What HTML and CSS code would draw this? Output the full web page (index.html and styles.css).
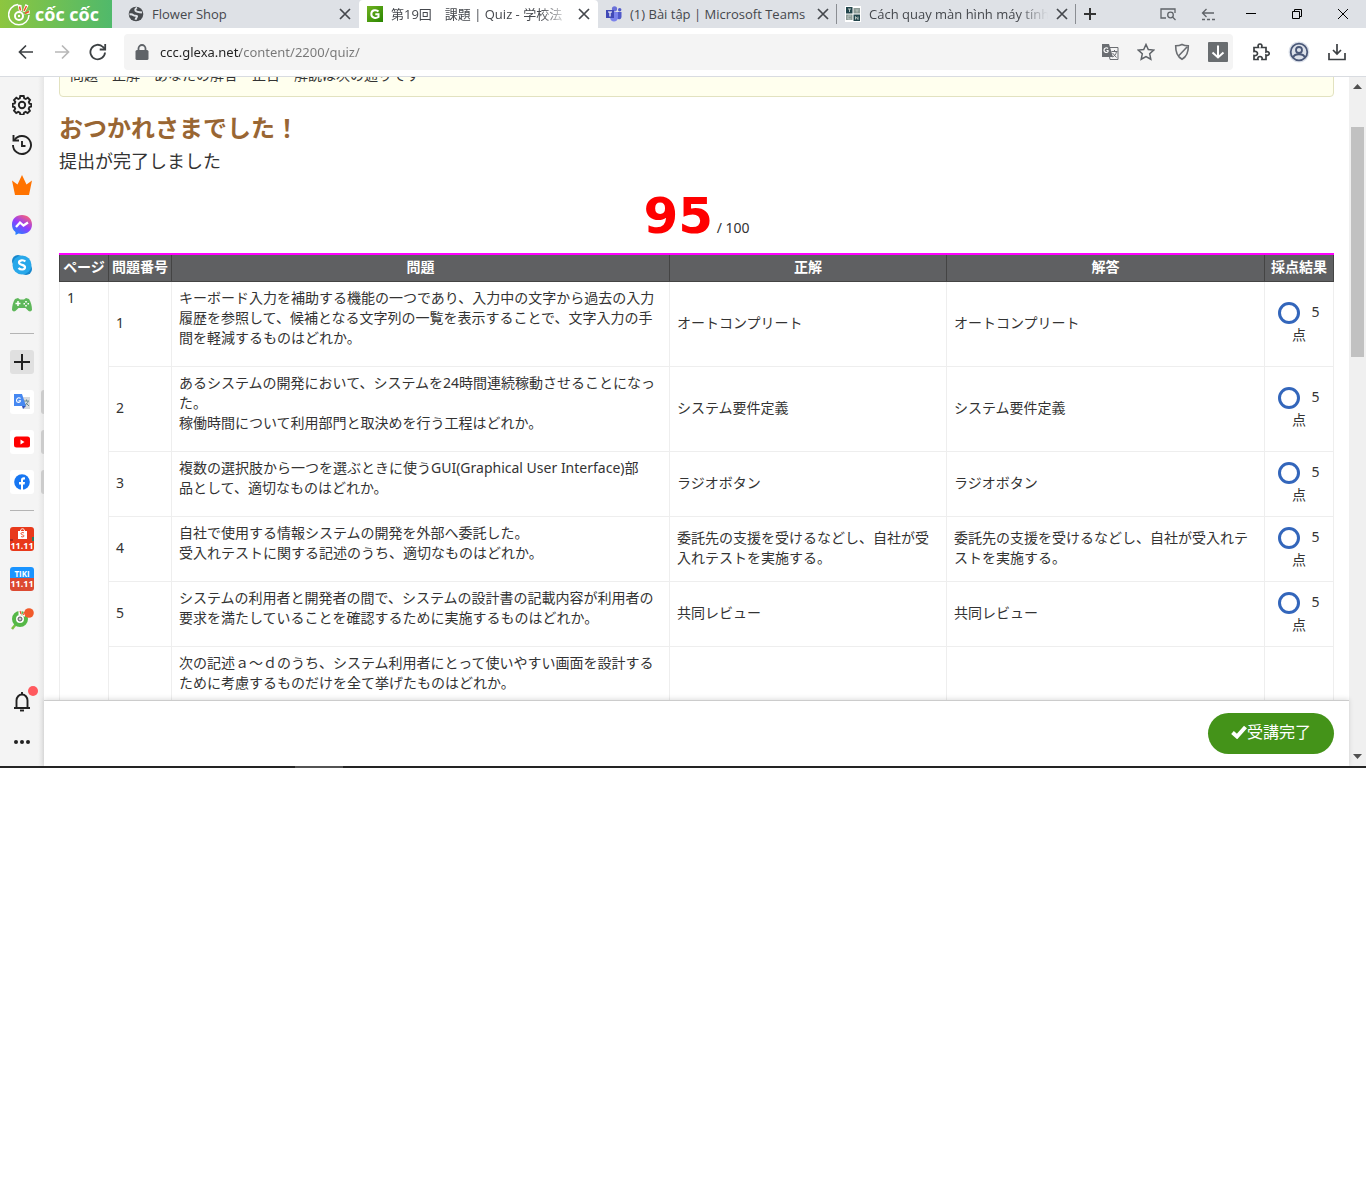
FILE: index.html
```html
<!DOCTYPE html>
<html lang="ja">
<head>
<meta charset="utf-8">
<meta name="viewport" content="width=device-width, initial-scale=1">
<title>第19回 課題 | Quiz</title>
<link rel="stylesheet" href="styles.css">
</head>
<body>
<div class="browser">
  <header class="tabstrip">
    <button class="brand" aria-label="Cốc Cốc">
      <svg width="22" height="24" viewBox="0 0 22 24" fill="none"><path d="M10 2.500A10.200 10.200 0 1 0 21 13" stroke="#fff" stroke-width="1.500"/><circle cx="11" cy="14" r="4" stroke="#fff" stroke-width="2"/><circle cx="11" cy="14" r="1.200" fill="#fff"/><path d="M11 9.500L9.500 2.500l4 .5.500 6zM14.500 9.500L17.500 2l3 1.500L17 10zM16 12.500L21.500 8l.5 3.500z" fill="#fff"/><path d="M12.500 8.500l-1-4M16 9l2.500-5M17 11.500l4-2" stroke="#f0512d" stroke-width="1.600"/></svg>
      <span class="brand-name">cốc cốc</span>
    </button>
    <nav class="tabs">
      <div class="tab">
        <svg width="16" height="16" viewBox="0 0 16 16"><circle cx="8" cy="8" r="7.300" fill="#484b4f"/><path d="M1.500 8.500c2-.5 3 0 4 .7s3 .3 3.500 1-1 1.500-1.500 3.500M9 1.500C6.500 3 7 4.500 8.500 5.500S12 6 14 6.500" fill="none" stroke="#dee1e6" stroke-width="2"/></svg>
        <a class="tab-title" href="#">Flower Shop</a>
        <button class="close" aria-label="Close tab"><svg width="12" height="12" viewBox="0 0 12 12"><path d="M1 1l10 10M11 1L1 11"/></svg></button>
      </div>
      <div class="tab active">
        <svg width="16" height="16" viewBox="0 0 16 16"><defs><linearGradient id="g" x1="0" y1="0" x2="1" y2="1"><stop stop-color="#72b321"/><stop offset="1" stop-color="#288500"/></linearGradient></defs><path fill="url(#g)" d="M0 0h16v16H0z"/><path d="M11.500 5.500C9.500 3.300 4.300 3.700 4.300 8c0 4.500 5 4.500 7.200 3V8.300H8.300" fill="none" stroke="#fff" stroke-width="2"/></svg>
        <a class="tab-title" href="#">第19回　課題 | Quiz - 学校法</a>
        <button class="close" aria-label="Close tab"><svg width="12" height="12" viewBox="0 0 12 12"><path d="M1 1l10 10M11 1L1 11"/></svg></button>
      </div>
      <div class="tab lined">
        <svg width="16" height="16" viewBox="0 0 16 16"><circle cx="8.500" cy="2.800" r="2.600" fill="#6a70d8"/><circle cx="13.700" cy="3.700" r="1.700" fill="#5059c9"/><path d="M11 6h4.500v4.500c0 3-3 3.500-4.500 2z" fill="#5059c9"/><path d="M4 6h8v5c0 6-8 6-8 0z" fill="#7b83eb"/><path d="M0 4h8v8H0z" fill="#4049b6"/><path d="M2 6h4M4 6v4.500" stroke="#fff" stroke-width="1.200"/></svg>
        <a class="tab-title" href="#">(1) Bài tập | Microsoft Teams</a>
        <button class="close" aria-label="Close tab"><svg width="12" height="12" viewBox="0 0 12 12"><path d="M1 1l10 10M11 1L1 11"/></svg></button>
      </div>
      <div class="tab lined">
        <svg width="16" height="16" viewBox="0 0 16 16"><path fill="#fff" d="M0 0h16v16H0z"/><path fill="#22454b" d="M1 1h6.500v6.500H1zM8.500 8.500H15V15H8.500z"/><path fill="#8e9c97" d="M8.500 2H15v5.500H8.500zM1 8.500h6.500V14H1z"/><path d="M3 3h3M4.500 3v3M10.500 4h3M12 4v2.500M6 10H3v3h3M10.500 13.500v-3l2.500 3v-3" fill="none" stroke="#b8c4c0" stroke-width="1"/></svg>
        <a class="tab-title" href="#">Cách quay màn hình máy tính</a>
        <button class="close" aria-label="Close tab"><svg width="12" height="12" viewBox="0 0 12 12"><path d="M1 1l10 10M11 1L1 11"/></svg></button>
      </div>
    </nav>
    <button class="newtab" aria-label="New tab"><svg width="12" height="12" viewBox="0 0 12 12"><path d="M6 0v12M0 6h12" stroke="#333" stroke-width="2"/></svg></button>
    <div class="winctl">
      <button aria-label="Search tabs"><svg width="16" height="14" viewBox="0 0 16 14" fill="none" stroke="#5f6368" stroke-width="1.300"><path d="M6 11H1V2h14v4"/><circle cx="10.500" cy="8" r="2.800"/><path d="M12.500 10l3 3"/></svg></button>
      <button aria-label="Back tabs"><svg width="14" height="14" viewBox="0 0 14 14" fill="none" stroke="#5f6368" stroke-width="1.300"><path d="M13 6H1.500M5.500 2l-4 4 4 4"/><path d="M1 12.500h13" stroke-dasharray="3 2"/></svg></button>
      <button aria-label="Minimize"><svg width="10" height="10" viewBox="0 0 10 10"><path d="M0 4h10v1H0z"/></svg></button>
      <button aria-label="Restore"><svg width="10" height="10" viewBox="0 0 10 10" fill="none" stroke="#000"><path d="M.5 2.500h7v7h-7zM2.500 2.500v-2h7v7h-2"/></svg></button>
      <button aria-label="Close window"><svg width="10" height="10" viewBox="0 0 10 10" stroke="#000"><path d="M0 0l10 10M10 0L0 10"/></svg></button>
    </div>
  </header>

  <div class="toolbar">
    <button aria-label="Back"><svg width="16" height="16" viewBox="0 0 16 16" fill="none" stroke="#3c4043" stroke-width="1.700"><path d="M15 8H2M8 1.500L1.500 8 8 14.500"/></svg></button>
    <button aria-label="Forward"><svg width="16" height="16" viewBox="0 0 16 16" fill="none" stroke="#b8b8b8" stroke-width="1.700"><path d="M1 8h13M8 1.500L14.500 8 8 14.500"/></svg></button>
    <button aria-label="Reload"><svg width="18" height="18" viewBox="0 0 18 18" fill="none" stroke="#3c4043" stroke-width="1.800"><path d="M16 9.500A7.300 7.300 0 1 1 14 4l2 2"/><path d="M16.200 1v5.500h-5.500"/></svg></button>
    <div class="address">
      <svg width="14" height="16" viewBox="0 0 14 16"><rect x=".5" y="6" width="13" height="10" rx="1.500" fill="#5f6368"/><path d="M3.500 7V4.500a3.500 3.500 0 0 1 7 0V7" fill="none" stroke="#5f6368" stroke-width="1.800"/></svg>
      <input class="url" type="text" aria-label="Address" value="ccc.glexa.net/content/2200/quiz/">
      <div class="actions">
        <button aria-label="Translate"><svg width="18" height="18" viewBox="0 0 18 18"><path d="M7 4.500h10v12H9z" fill="#f4f4f4" stroke="#6b6e72"/><path d="M1 1h7l4 13H1z" fill="#6b6e72"/><path d="M7 5.500C5.500 4 3 5 3 7.200s3 3 4 1.500V7.500H5.500" fill="none" stroke="#fff" stroke-width="1.200"/><path d="M10.500 8.500h6M13.500 7v1.500M15.500 8.500c-.5 3-2 4.500-4 5.500M11.500 10l4 4.500" fill="none" stroke="#6b6e72"/></svg></button>
        <button aria-label="Bookmark"><svg width="18" height="18" viewBox="0 0 18 18"><path d="M9 1.500l2.300 5 5.400.6-4 3.700 1.100 5.400L9 13.500l-4.800 2.700 1.100-5.400-4-3.700 5.400-.6z" fill="none" stroke="#5f6368" stroke-width="1.500"/></svg></button>
        <button aria-label="Shield"><svg width="16" height="18" viewBox="0 0 16 18" fill="none" stroke="#6b6e72" stroke-width="1.600"><path d="M8 1.500c2 1 4 1.300 6.300 1.300C14.500 9 13 13.500 8 16.300 3 13.500 1.500 9 1.700 2.800 4 2.800 6 2.500 8 1.500zM13 4L4 13.500"/></svg></button>
        <button aria-label="Download video"><svg width="20" height="20" viewBox="0 0 20 20"><rect width="20" height="20" rx="1" fill="#696d70"/><path d="M10 3.500v12M4.500 10.500l5.500 5 5.500-5" fill="none" stroke="#fff" stroke-width="2"/></svg></button>
      </div>
    </div>
    <div class="extras">
      <button aria-label="Extensions"><svg width="18" height="18" viewBox="0 0 18 18"><path d="M2 4.500h4.500C5.500 2 6.500 1 8 1s2.500 1 1.500 3.500H14V9c2-.8 3.200 0 3.200 1.500S16 12.700 14 12v4.500h-4c.5-2-.5-3-2-3s-2.500 1-2 3H2v-4c2.500.5 3.500-.7 3.500-2S4.500 8 2 8.500z" fill="none" stroke="#3c4043" stroke-width="1.700"/></svg></button>
      <button aria-label="Profile"><svg width="22" height="22" viewBox="0 0 22 22" fill="none" stroke="#4a5878" stroke-width="1.800"><circle cx="11" cy="11" r="10.500" fill="#dce1ea" stroke="none"/><circle cx="11" cy="11" r="8.300"/><circle cx="11" cy="9" r="3"/><path d="M5 17c1-5 11-5 12 0"/></svg></button>
      <button aria-label="Downloads"><svg width="18" height="18" viewBox="0 0 18 18" fill="none" stroke="#3c4043" stroke-width="1.700"><path d="M1 10v6.500h16V10M9 1v9.500M5 7l4 4 4-4"/></svg></button>
    </div>
  </div>

  <div class="body">
    <aside class="sidebar">
      <button aria-label="Settings"><svg width="20" height="20" viewBox="0 0 20 20" fill="none" stroke="#222" stroke-width="1.900"><circle cx="10" cy="10" r="3.200"/><path d="M8.300 1h3.400l.5 2.300 1.600.7 2-1.300 2.200 2.300-1.200 2 .7 1.600 1.800.4v2.500l-2 .7-.6 1.600 1.200 2-2.300 2.300-2-1.200-1.500.7-.5 2H8.300l-.5-2-1.600-.7-2 1.200L2 15.700l1.200-2-.7-1.600-1.800-.5V8.900l2-.5.600-1.500L2 5l2.300-2.300 2 1.300 1.500-.7z"/></svg></button>
      <button aria-label="History"><svg width="20" height="20" viewBox="0 0 20 20" fill="none" stroke="#222" stroke-width="1.900"><path d="M2.500 5A9 9 0 1 1 1 10"/><path d="M1.500 0v5.500H7M10 6v5h3.500"/></svg></button>
      <button aria-label="Rewards"><svg width="20" height="20" viewBox="0 0 20 20"><path d="M3 20L0 5.500l5.500 4L10 0l4.500 9.500 5.500-4L17 20z" fill="#ff7300"/></svg></button>
      <button aria-label="Messenger"><svg width="20" height="20" viewBox="0 0 20 20"><defs><linearGradient id="m" x1=".2" y1="1" x2=".8" y2="0"><stop stop-color="#1688ff"/><stop offset=".5" stop-color="#913cff"/><stop offset="1" stop-color="#ff6470"/></linearGradient></defs><path d="M10 0c6 0 10 4 10 9.600S16 19 10 19c-1.500 0-2.500-.2-3.500-.5L3.500 20v-3C1 15 0 13 0 9.600 0 4 4 0 10 0z" fill="url(#m)"/><path d="M4 12l4-4.500 3.500 3L16 7.500" fill="none" stroke="#fff" stroke-width="2.300"/></svg></button>
      <button aria-label="Skype"><svg width="20" height="20" viewBox="0 0 20 20"><circle cx="6" cy="6" r="6" fill="#1686cc"/><circle cx="14" cy="14" r="6" fill="#1686cc"/><circle cx="10" cy="10" r="9.500" fill="#28a8ea"/><path d="M13.300 6.500C11.500 4.500 7 5 7 7.500c0 3 6 1.700 6 4.700 0 2.800-4.500 3-6.500.8" fill="none" stroke="#fff" stroke-width="2.200"/></svg></button>
      <button aria-label="Games"><svg width="20" height="14" viewBox="0 0 20 14"><path d="M3 1l3-1 2 1.500h4L14 0l3 1c2 3 3 7 3 11-1 2-3 2-5-.5L13.500 10h-7L5 11.500C3 14 1 14 0 12 0 8 1 4 3 1z" fill="#5eb75a"/><path d="M6 3v5M3.500 5.500h5" stroke="#fff" stroke-width="1.500"/><path d="M14 3v1.500M14 7v1.500M11.500 5.700H13M15.500 5.700H17" stroke="#fff" stroke-width="1.600"/></svg></button>
      <hr>
      <button class="tile add" aria-label="Add"><svg width="16" height="16" viewBox="0 0 16 16"><path d="M8 0v16M0 8h16" stroke="#222" stroke-width="2"/></svg></button>
      <button class="tile open" aria-label="Google Translate"><svg width="16" height="16" viewBox="0 0 16 16"><path d="M7 3h9v12H9z" fill="#d8dadd"/><path d="M0 0h8l4 12H0z" fill="#4688f1"/><path d="M8 12h4l-3 3z" fill="#3152b8"/><path d="M6.500 4.500C5 3 2.500 4 2.500 6.500s3.500 2.500 4 .3H4.500" fill="none" stroke="#fff" stroke-width="1.100"/><path d="M10 7h5M12.500 5.500V7M14 7c0 2-1.500 3-3 4M12 9l3 3" fill="none" stroke="#6d8c8e"/></svg></button>
      <button class="tile open" aria-label="YouTube"><svg width="16" height="12" viewBox="0 0 16 12"><rect width="16" height="11" y=".5" rx="2.500" fill="#f00"/><path d="M6.500 3.500v5l4-2.500z" fill="#fff"/></svg></button>
      <button class="tile open" aria-label="Facebook"><svg width="16" height="16" viewBox="0 0 16 16"><circle cx="8" cy="8" r="7.800" fill="#1877f2"/><path d="M7 16v-5.500H5V8h2V6.200C7 4 8.500 3 11 3.500v2c-1.500-.1-2 .2-2 1.200V8h2l-.4 2.500H9V16z" fill="#fff"/></svg></button>
      <hr>
      <button class="promo shop" aria-label="Shopee"><svg width="24" height="14" viewBox="0 0 24 14"><path d="M0 12h3v2H0z" fill="#a32a20"/><path d="M22 10h2v4h-2z" fill="#287c60"/><path d="M8 4h9v8H8z" fill="#fff"/><path d="M10.500 4c0-3 4-3 4 0" fill="none" stroke="#fff"/><path d="M14 6c-1-1-3-.5-3 .7s3 1 3 2.200-2 1.300-3 .5" fill="none" stroke="#ee4d2d"/></svg><span>11.11</span></button>
      <button class="promo tiki" aria-label="Tiki"><span class="tiki-name">TIKI</span><span>11.11</span></button>
      <button class="news" aria-label="News"><svg width="24" height="24" viewBox="0 0 24 24"><path d="M2 22l4-5" stroke="#7bc143" stroke-width="2.500"/><circle cx="10" cy="12" r="6" fill="#fff" stroke="#55b847" stroke-width="4"/><circle cx="10" cy="12" r="2" fill="#ccc" stroke="#555"/><path d="M10 8V4M13 9l3-4" stroke="#fff" stroke-width="3"/><path d="M11 7l-1-3M13 8l2-3" stroke="#f0512d" stroke-width="1.200"/><circle cx="19" cy="6" r="4.800" fill="#f15a2b"/></svg></button>
      <div class="side-end">
        <button class="bell" aria-label="Notifications"><svg width="18" height="20" viewBox="0 0 18 20" fill="none" stroke="#222" stroke-width="1.900"><path d="M1 16h16M3.500 16V8.500a5.500 6 0 0 1 11 0V16M9 2.500V0"/><path d="M7 18.500h4"/></svg></button>
        <button aria-label="More"><svg width="16" height="4" viewBox="0 0 16 4" fill="#222"><circle cx="2" cy="2" r="2"/><circle cx="8" cy="2" r="2"/><circle cx="14" cy="2" r="2"/></svg></button>
      </div>
    </aside>

    <div class="page">
      <main class="content">
        <p class="notice">問題　正解　あなたの解答　正否　解説は次の通りです</p>
        <h1>おつかれさまでした！</h1>
        <p class="lead">提出が完了しました</p>
        <p class="score"><strong>95</strong> / 100</p>
        <table class="results">
          <colgroup><col class="c-page"><col class="c-num"><col><col class="c-correct"><col class="c-answer"><col class="c-result"></colgroup>
          <thead><tr><th>ページ</th><th>問題番号</th><th>問題</th><th>正解</th><th>解答</th><th>採点結果</th></tr></thead>
          <tbody>
            <tr><td class="pageno" rowspan="6">1</td><td>1</td><td><p>キーボード入力を補助する機能の一つであり、入力中の文字から過去の入力履歴を参照して、候補となる文字列の一覧を表示することで、文字入力の手間を軽減するものはどれか。</p></td><td>オートコンプリート</td><td>オートコンプリート</td><td class="mark"><span class="ok"></span>5<br>点</td></tr>
            <tr><td>2</td><td><p>あるシステムの開発において、システムを24時間連続稼動させることになった。<br>稼働時間について利用部門と取決めを行う工程はどれか。</p></td><td>システム要件定義</td><td>システム要件定義</td><td class="mark"><span class="ok"></span>5<br>点</td></tr>
            <tr><td>3</td><td><p>複数の選択肢から一つを選ぶときに使うGUI(Graphical User Interface)部<br>品として、適切なものはどれか。</p></td><td>ラジオボタン</td><td>ラジオボタン</td><td class="mark"><span class="ok"></span>5<br>点</td></tr>
            <tr><td>4</td><td><p>自社で使用する情報システムの開発を外部へ委託した。<br>受入れテストに関する記述のうち、適切なものはどれか。</p></td><td>委託先の支援を受けるなどし、自社が受入れテストを実施する。</td><td>委託先の支援を受けるなどし、自社が受入れテストを実施する。</td><td class="mark"><span class="ok"></span>5<br>点</td></tr>
            <tr><td>5</td><td><p>システムの利用者と開発者の間で、システムの設計書の記載内容が利用者の要求を満たしていることを確認するために実施するものはどれか。</p></td><td>共同レビュー</td><td>共同レビュー</td><td class="mark"><span class="ok"></span>5<br>点</td></tr>
            <tr><td></td><td><p>次の記述ａ～ｄのうち、システム利用者にとって使いやすい画面を設計するために考慮するものだけを全て挙げたものはどれか。</p></td><td></td><td></td><td></td></tr>
          </tbody>
        </table>
      </main>
      <footer class="actionbar">
        <button class="done"><svg width="16" height="14" viewBox="0 0 16 14"><path d="M1.500 7.500l4.500 4L14.500 2" fill="none" stroke="#fff" stroke-width="4"/></svg>受講完了</button>
      </footer>
    </div>

    <div class="scrollbar">
      <svg width="9" height="5" viewBox="0 0 9 5"><path d="M0 5l4.500-5L9 5z" fill="#505050"/></svg>
      <div class="track"><div class="thumb"></div></div>
      <svg width="9" height="5" viewBox="0 0 9 5"><path d="M0 0l4.500 5L9 0z" fill="#505050"/></svg>
    </div>
  </div>
  <div class="taskbar"><div class="task"></div></div>
</div>
</body>
</html>
```
FILE: styles.css
```css
* { box-sizing: border-box; }
body { margin: 0; background: #fff; color: #333; font: 14px/20px "Noto Sans", "Noto Sans CJK JP", sans-serif; }
button { display: flex; align-items: center; justify-content: center; padding: 0; border: 0; background: none; color: inherit; font: inherit; }
svg { display: block; flex: none; }
p, h1 { margin: 0; }

.browser { display: flex; flex-direction: column; height: 64vh; min-height: 480px; overflow: hidden; }

/* Tab strip */
.tabstrip { display: flex; flex: none; height: 28px; background: #dee1e6; }
.brand { flex: none; justify-content: flex-start; width: 112px; gap: 5px; padding-left: 8px; background: linear-gradient(90deg, #8dc63f, #50b96b); color: #fff; }
.brand-name { font: bold 18px/24px "Open Sans", sans-serif; }
.tabs { display: flex; flex: 0 1 964px; min-width: 0; }
.tab { position: relative; display: flex; flex: 1 1 0; align-items: center; gap: 8px; min-width: 0; padding: 0 8px; font: 13px/20px "Open Sans", "Noto Sans CJK JP", sans-serif; }
.tab:first-child { padding-left: 16px; }
.tab.active { background: #fff; border-radius: 4px 4px 0 0; }
.tab.lined::after { content: ""; position: absolute; right: 0; top: 4px; width: 1px; height: 20px; background: #8a8d92; }
.tab-title { flex: 1; min-width: 0; overflow: hidden; white-space: nowrap; color: #45484d; text-decoration: none; }
.tab:nth-child(even) .tab-title { mask-image: linear-gradient(90deg, #000 calc(100% - 30px), transparent); }
.close { flex: none; width: 12px; height: 20px; }
.close svg { stroke: #45484d; stroke-width: 1.7px; }
.newtab { flex: none; width: 28px; }
.winctl { display: flex; margin-left: auto; }
.winctl button { width: 46px; }
.winctl button:first-child, .winctl button:nth-child(2) { width: 40px; }

/* Toolbar */
.toolbar { display: flex; flex: none; align-items: center; height: 49px; padding: 0 10px 1px 8px; border-bottom: 1px solid #d9dce1; }
.toolbar > button { width: 36px; height: 36px; }
.address { display: flex; flex: 1; align-items: center; gap: 11px; height: 36px; margin-left: 8px; padding-left: 11px; border-radius: 4px; background: #f4f4f4; }
.url { flex: 1; min-width: 0; height: 24px; padding: 0; border: 0; font: 13px/20px "Noto Sans", sans-serif; color: transparent; background: linear-gradient(90deg, #222 80px, #777 80px); background-clip: text; }
.actions, .extras { display: flex; align-items: center; }
.actions { margin-right: -3px; }
.actions button { width: 36px; }
.extras { margin-left: 9px; }
.extras button { width: 38px; height: 36px; }

/* Main area */
.body { display: flex; flex: 1; min-height: 0; }
.sidebar { display: flex; flex: none; flex-direction: column; align-items: center; gap: 16px; width: 44px; padding: 16px 0 12px; background: linear-gradient(90deg, #f4f4f4 38px, #e6e6e6); }
.sidebar button { position: relative; flex: none; width: 24px; height: 24px; }
.sidebar hr { flex: none; width: 24px; height: 1px; margin: 0; border: 0; background: #b4b4b4; }
.sidebar .tile { border-radius: 3px; background: #fff; }
.sidebar .add { background: #e0e0e0; }
.open::after { content: ""; position: absolute; right: -10px; top: 0; width: 3px; height: 24px; border-radius: 3px 0 0 3px; background: #ccc; }
.sidebar .promo { flex-direction: column; border-radius: 3px; overflow: hidden; color: #fff; font: bold 9px/10px "Open Sans", sans-serif; }
.shop { background: #e8391b; }
.tiki { background: linear-gradient(#1a94ff 11px, #dc4a32 11px); }
.tiki-name { font-size: 8px; }
.side-end { display: flex; flex-direction: column; gap: 16px; margin-top: auto; }
.bell::after { content: ""; position: absolute; right: -4px; top: -4px; width: 10px; height: 10px; border-radius: 50%; background: #ff5a5f; }

.page { display: flex; flex: 1; flex-direction: column; min-width: 0; }
.content { flex: 1; min-height: 0; padding: 0 15px; overflow: hidden; }
.notice { margin-top: -22px; padding: 9px 10px 11px; border: 1px solid #e2e2c0; border-radius: 4px; background: #ffffee; }
h1 { margin-top: 15px; font-size: 24px; line-height: 32px; color: #963; }
.lead { margin-top: 4px; font-size: 18px; line-height: 26px; }
.score { height: 79px; text-align: center; line-height: 84px; }
.score strong { font: bold 50px/84px "DejaVu Sans", sans-serif; color: #f00; }

.results { width: 100%; border-collapse: collapse; table-layout: fixed; }
.c-page { width: 49px; }
.c-num { width: 63px; }
.c-correct { width: 277px; }
.c-answer { width: 318px; }
.c-result { width: 69px; }
.results th { height: 27px; padding: 0 0 2px; border: 1px solid #444; border-top: 2px solid #f0f; background: #5f6062; color: #fff; }
.results td { padding: 6px 7px 8px; border: 1px solid #eee; vertical-align: middle; overflow-wrap: anywhere; }
.results td p { margin-bottom: 10px; }
.results .pageno { vertical-align: top; }
.results .mark { padding: 0; line-height: 22px; text-align: center; }
.ok { display: inline-block; width: 22px; height: 22px; margin-right: 11px; border: 3px solid #36b; border-radius: 50%; vertical-align: middle; }

.actionbar { position: relative; display: flex; flex: none; align-items: center; justify-content: flex-end; height: 66px; padding: 0 15px; border-top: 1px solid #ccc; background: #fff; box-shadow: 0 -1px 5px #0002; }
.done { height: 41px; padding: 0 23px 3px; border-radius: 21px; background: #449319; color: #fff; font-size: 16px; }

.scrollbar { display: flex; flex: none; flex-direction: column; align-items: center; justify-content: space-between; width: 17px; padding: 7px 0; background: #f0f0f0; }
.track { flex: 1; width: 13px; padding: 38px 0; }
.thumb { height: 39%; background: #c1c1c1; }

.taskbar { flex: none; height: 2px; padding-left: 295px; background: #252525; }
.task { width: 48px; height: 2px; background: #555; }
```
